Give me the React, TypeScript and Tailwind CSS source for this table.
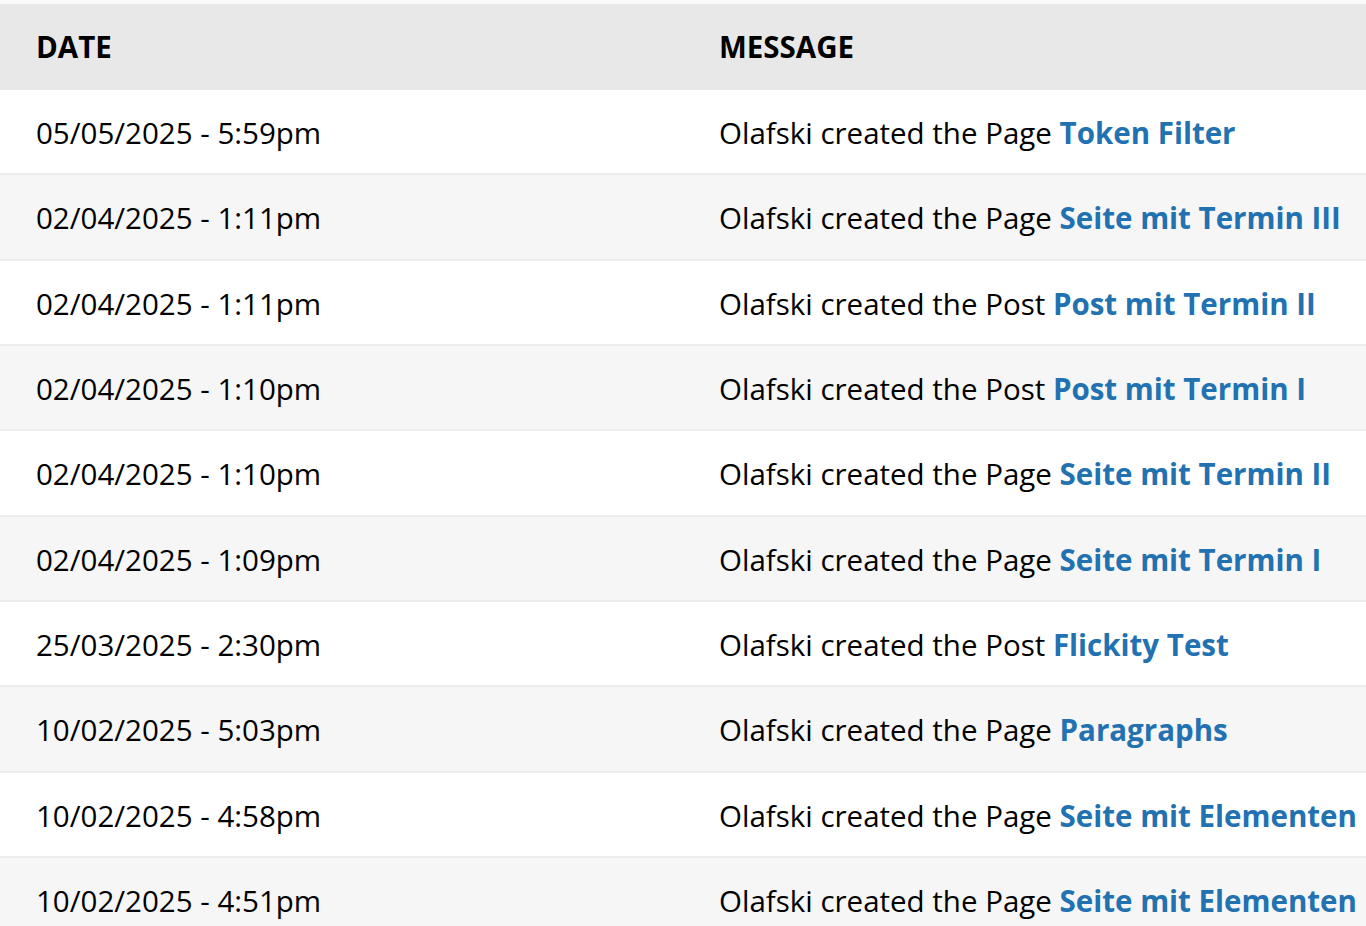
const rows = [
  { date: "05/05/2025 - 5:59pm", type: "Page", title: "Token Filter" },
  { date: "02/04/2025 - 1:11pm", type: "Page", title: "Seite mit Termin III" },
  { date: "02/04/2025 - 1:11pm", type: "Post", title: "Post mit Termin II" },
  { date: "02/04/2025 - 1:10pm", type: "Post", title: "Post mit Termin I" },
  { date: "02/04/2025 - 1:10pm", type: "Page", title: "Seite mit Termin II" },
  { date: "02/04/2025 - 1:09pm", type: "Page", title: "Seite mit Termin I" },
  { date: "25/03/2025 - 2:30pm", type: "Post", title: "Flickity Test" },
  { date: "10/02/2025 - 5:03pm", type: "Page", title: "Paragraphs" },
  { date: "10/02/2025 - 4:58pm", type: "Page", title: "Seite mit Elementen" },
  { date: "10/02/2025 - 4:51pm", type: "Page", title: "Seite mit Elementen" },
];

export default function App() {
  return (
    <div
      className="min-h-screen bg-[#fafafa] pt-[4px] text-black overflow-hidden"
      style={{ fontFamily: '"Open Sans", "Liberation Sans", sans-serif' }}
    >
      <div className="w-[1366px]">
        {/* header */}
        <div className="grid grid-cols-2 h-[86px] items-center bg-[#e8e8e8] text-[29.5px] font-bold">
          <div className="pl-[36px]">DATE</div>
          <div className="pl-[36px]">MESSAGE</div>
        </div>

        {rows.map((row, i) => (
          <div
            key={i}
            className={`grid grid-cols-2 items-center pt-[3px] text-[29.5px] whitespace-nowrap ${
              i > 0 ? "h-[85.33px] border-t-2 border-[#ececec]" : "h-[83.33px]"
            } ${i % 2 === 1 ? "bg-[#f6f6f6]" : "bg-white"}`}
          >
            <div className="pl-[36px]">{row.date}</div>
            <div className="pl-[36px]">
              Olafski created the {row.type}{" "}
              <a href="#" className="font-bold text-[#2271b1]">
                {row.title}
              </a>
            </div>
          </div>
        ))}
      </div>
    </div>
  );
}
